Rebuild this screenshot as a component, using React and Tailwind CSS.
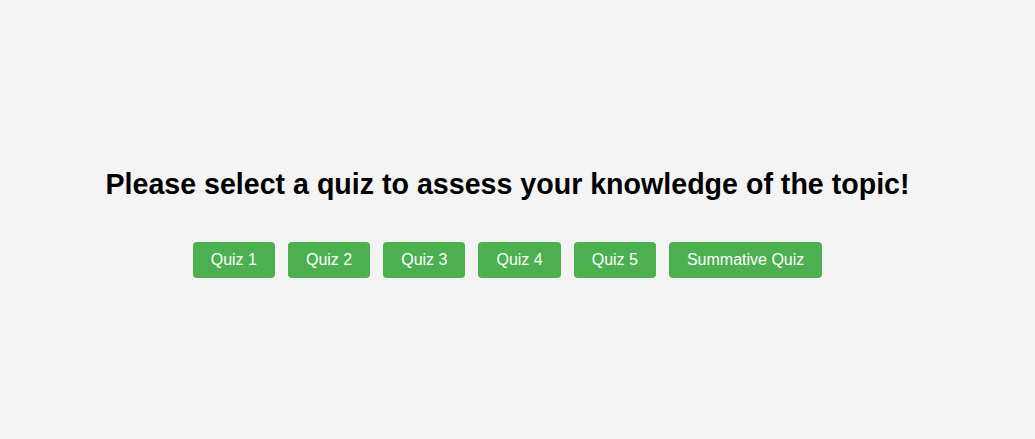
export default function App() {
  const quizzes = ["Quiz 1", "Quiz 2", "Quiz 3", "Quiz 4", "Quiz 5", "Summative Quiz"];
  return (
    <div className="min-h-screen bg-[#f4f4f4] flex flex-col items-center justify-center pr-[20px] pt-[6px]" style={{ fontFamily: '"Liberation Sans", Arial, sans-serif' }}>
      <h1 className="text-[28.6px] leading-[32px] font-bold text-black">Please select a quiz to assess your knowledge of the topic!</h1>
      <div className="mt-[42px] flex gap-[13px]">
        {quizzes.map((q) => (
          <button key={q} className="h-[36px] px-[18px] bg-[#4caf50] text-white text-[16px] rounded-[4px]">{q}</button>
        ))}
      </div>
    </div>
  );
}
